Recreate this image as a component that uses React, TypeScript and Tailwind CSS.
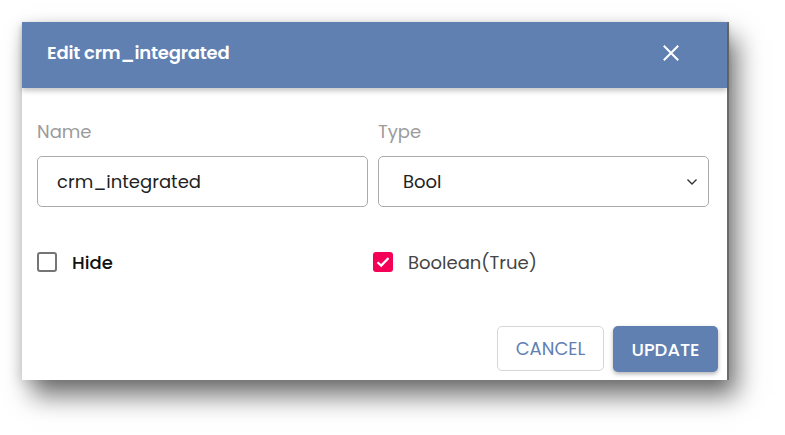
import React from "react";

export default function App() {
  const font = { fontFamily: "Poppins, Inter, 'Noto Sans', sans-serif" };
  return (
    <div className="w-[785px] h-[435px] bg-white pl-[22px] pt-[22px]" style={font}>
      <div className="w-[705px] h-[358px] bg-white flex flex-col shadow-[2px_0_0_#6b6b6b,10px_16px_24px_rgba(0,0,0,0.55),-2px_2px_12px_rgba(0,0,0,0.12)]">
        <div className="relative z-10 h-[66px] bg-[#6180b2] flex items-start justify-between pl-[25px] pr-[48px] pt-[17px] shadow-[0_3px_5px_rgba(0,0,0,0.22)]">
          <div className="text-white text-[18px] font-semibold tracking-[-0.2px]">Edit crm_integrated</div>
          <svg width="16" height="16" viewBox="0 0 16 16" className="mt-[6px]">
            <path d="M1.5 1.5 L14.5 14.5 M14.5 1.5 L1.5 14.5" stroke="white" strokeWidth="2" strokeLinecap="square" />
          </svg>
        </div>
        <div className="flex-1 flex flex-col pl-[15px] pr-[9px]">
          <div className="flex gap-[10px] pt-[30px]">
            <div className="flex flex-col w-[331px]">
              <div className="text-[18px] text-[#9b9b9b] leading-[27px]">Name</div>
              <div className="mt-[11px] h-[51px] border-[1.5px] border-[#ababab] rounded-[5px] flex items-center pl-[19px] text-[18px] text-[#222]">
                crm_integrated
              </div>
            </div>
            <div className="flex flex-col w-[331px]">
              <div className="text-[18px] text-[#9b9b9b] leading-[27px]">Type</div>
              <div className="mt-[11px] h-[51px] border-[1.5px] border-[#ababab] rounded-[5px] flex items-center justify-between pl-[24px] pr-[10px] text-[18px] text-[#222]">
                <span>Bool</span>
                <svg width="12" height="8" viewBox="0 0 12 8">
                  <path d="M1.5 1.5 L6 6 L10.5 1.5" stroke="#333" strokeWidth="1.4" fill="none" />
                </svg>
              </div>
            </div>
          </div>
          <div className="flex mt-[45px] h-[20px] items-center">
            <div className="w-[336px] flex items-center">
              <div className="w-[20px] h-[20px] border-2 border-[#757575] rounded-[3px]" />
              <span className="ml-[15px] text-[18px] text-[#111] font-medium">Hide</span>
            </div>
            <div className="flex items-center">
              <div className="w-[20px] h-[20px] bg-[#f50057] rounded-[3px] flex items-center justify-center">
                <svg width="18" height="18" viewBox="0 0 18 18">
                  <path d="M3.5 9.2 L7.2 12.6 L14.5 5" stroke="white" strokeWidth="2.2" fill="none" />
                </svg>
              </div>
              <span className="ml-[15px] text-[18px] text-[#444]">Boolean(True)</span>
            </div>
          </div>
          <div className="flex-1" />
          <div className="flex justify-end gap-[9px] pb-[8px]">
            <button className="w-[107px] h-[45px] border border-[#d6d6d6] rounded-[5px] bg-white text-[#6180b2] text-[18px]">
              CANCEL
            </button>
            <button className="w-[105px] h-[46px] rounded-[5px] bg-[#6180b2] text-white text-[18px] font-medium shadow-[0_2px_4px_rgba(0,0,0,0.3)]">
              UPDATE
            </button>
          </div>
        </div>
      </div>
    </div>
  );
}
